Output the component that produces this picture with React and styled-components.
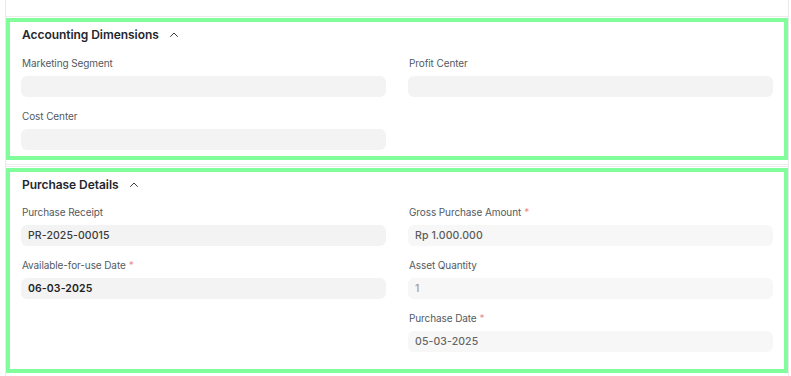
import React from "react";
import styled, { createGlobalStyle } from "styled-components";

const Global = createGlobalStyle`
  html, body { margin: 0; padding: 0; background: #ffffff; }
  body { font-family: Inter, "Noto Sans", sans-serif; -webkit-font-smoothing: antialiased; }
`;

const Page = styled.div`
  margin-left: 5px;
  width: 784px;
  box-sizing: border-box;
  border-left: 1px solid #ebebeb;
  border-right: 1px solid #ebebeb;
  height: 376px;
  overflow: hidden;
`;

const PrevSection = styled.div`
  height: 16px;
  border-bottom: 1px solid #ebebeb;
`;

const Section = styled.section`
  margin-top: 1px;
  box-sizing: border-box;
  height: ${(p) => p.$h}px;
  border: 4px solid #82fd9b;
  padding: 4px 11px 0 11px;
`;

const Divider = styled.div`
  margin-top: 4px;
  height: 1px;
  border-top: 1px solid #ececec;
  border-bottom: 1px solid #ececec;
`;

const Head = styled.div`
  display: flex;
  align-items: center;
  gap: 10px;
  height: 16px;
  padding-left: 1px;
  margin-bottom: ${(p) => p.$mb}px;
`;

const Title = styled.h3`
  margin: 0;
  font-size: 12px;
  font-weight: 600;
  color: #1f272e;
  letter-spacing: -0.05px;
`;

const Columns = styled.div`
  display: grid;
  grid-template-columns: 365px 365px;
  column-gap: 22px;
`;

const Column = styled.div`
  display: flex;
  flex-direction: column;
  gap: 12px;
`;

const Field = styled.div`
  display: flex;
  flex-direction: column;
`;

const Label = styled.label`
  height: 14px;
  line-height: 14px;
  font-size: 10px;
  letter-spacing: -0.1px;
  color: #525a62;
  padding-left: 1px;
  margin-bottom: 6px;
`;

const Req = styled.span`
  color: #ec8f8f;
  margin-left: 3px;
`;

const Input = styled.div`
  height: 21px;
  border-radius: 6px;
  background: ${(p) => (p.$ro ? "#f7f7f7" : "#f3f3f3")};
  display: flex;
  align-items: center;
  padding-left: 7px;
  font-size: 10.5px;
  font-weight: ${(p) => p.$w || 500};
  color: ${(p) => p.$c || "#383838"};
  letter-spacing: 0.1px;
`;

const Chevron = () => (
  <svg width="10" height="7" viewBox="0 0 10 7" fill="none">
    <path d="M1.5 5.5 L5 2 L8.5 5.5" stroke="#3a3a3a" strokeWidth="1" strokeLinecap="round" strokeLinejoin="round" />
  </svg>
);

const F = ({ label, req, value, ro, c, w }) => (
  <Field>
    <Label>
      {label}
      {req && <Req>*</Req>}
    </Label>
    <Input $ro={ro} $c={c} $w={w}>
      {value}
    </Input>
  </Field>
);

export default function App() {
  return (
    <>
      <Global />
      <Page>
        <PrevSection />
        <Section $h={142}>
          <Head $mb={14}>
            <Title>Accounting Dimensions</Title>
            <Chevron />
          </Head>
          <Columns>
            <Column>
              <F label="Marketing Segment" />
              <F label="Cost Center" />
            </Column>
            <Column>
              <F label="Profit Center" />
            </Column>
          </Columns>
        </Section>
        <Divider />
        <Section $h={205}>
          <Head $mb={13}>
            <Title>Purchase Details</Title>
            <Chevron />
          </Head>
          <Columns>
            <Column>
              <F label="Purchase Receipt" value="PR-2025-00015" c="#3a3a3a" />
              <F label="Available-for-use Date" req value="06-03-2025" c="#1f1f1f" w={600} />
            </Column>
            <Column>
              <F label="Gross Purchase Amount" req value="Rp 1.000.000" ro c="#5a5a5a" />
              <F label="Asset Quantity" value="1" ro c="#a89a8c" />
              <F label="Purchase Date" req value="05-03-2025" ro c="#666666" />
            </Column>
          </Columns>
        </Section>
      </Page>
    </>
  );
}
